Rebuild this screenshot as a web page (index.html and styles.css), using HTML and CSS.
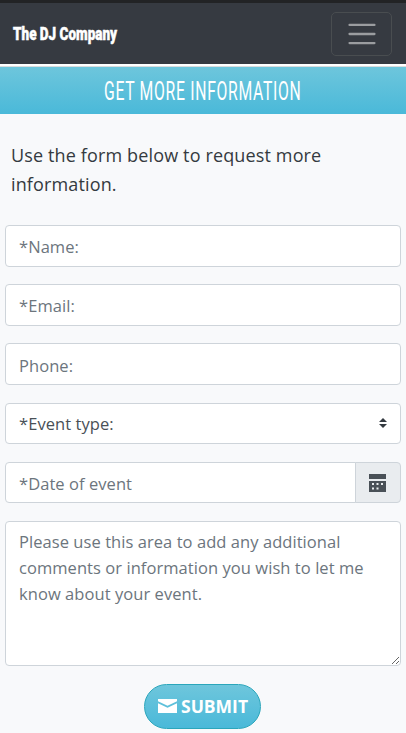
FILE: index.html
```
<!DOCTYPE html>
<html lang="en">
<head>
    <meta charset="UTF-8">
    <meta name="viewport" content="width=device-width, initial-scale=1.0">
    <title>The DJ Company</title>
    <link rel="stylesheet" href="styles.css">
</head>
<body>
    <nav class="navbar">
        <a class="navbar-brand" href="#">The DJ Company</a>
        <button class="navbar-toggler" type="button" aria-label="Toggle navigation">
            <svg width="30" height="30" viewBox="0 0 30 30">
                <path stroke="rgba(255,255,255,.5)" stroke-linecap="round" stroke-width="2" d="M4 7h22M4 15h22M4 23h22"/>
            </svg>
        </button>
    </nav>

    <h1 class="title"><span>GET MORE INFORMATION</span></h1>

    <main>
        <p class="intro">Use the form below to request more information.</p>

        <form id="contactForm">
            <input class="form-control" type="text" id="name" placeholder="*Name:">
            <input class="form-control" type="text" id="email" placeholder="*Email:">
            <input class="form-control" type="text" id="phone" placeholder="Phone:">
            <div class="select-group">
                <select class="form-control" id="eventType">
                    <option>*Event type:</option>
                </select>
                <svg class="select-arrow" width="8" height="10" viewBox="0 0 4 5">
                    <path fill="#343a40" d="M2 0L0 2h4zm0 5L0 3h4z"/>
                </svg>
            </div>
            <div class="input-group">
                <input class="form-control" type="text" id="date" placeholder="*Date of event">
                <span class="input-addon">
                    <svg width="17" height="18" viewBox="0 0 17 18">
                        <path fill="#495057" fill-rule="evenodd" d="M0 0h17v5H0zM0 7h17v11H0zM3 9v2h2V9zM7.500 9v2h2V9zM12 9v2h2V9zM3 13.500v2h2v-2zM7.500 13.500v2h2v-2z"/>
                    </svg>
                </span>
            </div>
            <textarea class="form-control" id="comments" placeholder="Please use this area to add any additional comments or information you wish to let me know about your event."></textarea>
            <button class="submit" type="submit">
                <svg width="19" height="14" viewBox="0 0 19 14">
                    <path fill="#fff" d="M0 0h19v2.2L9.500 6.800 0 2.200zM0 4.200l9.500 4.600L19 4.200V14H0z"/>
                </svg>
                <span>SUBMIT</span>
            </button>
        </form>
    </main>
</body>
</html>
```
FILE: styles.css
```
* {
    box-sizing: border-box;
}

body {
    margin: 0;
    height: 733px;
    overflow: hidden;
    background-color: #f8f9fb;
    color: #343a40;
    font-family: "Open Sans", sans-serif;
}

.navbar {
    display: flex;
    align-items: center;
    justify-content: space-between;
    height: 64px;
    padding: 0 14px 0 13px;
    border-top: 3px solid #222325;
    background-color: #363a41;
}

.navbar-brand {
    padding-top: 1px;
    color: #fff;
    font-family: Roboto, sans-serif;
    font-size: 18.5px;
    font-weight: 900;
    white-space: nowrap;
    text-decoration: none;
    -webkit-text-stroke: 0.5px #fff;
    transform: scaleX(0.73);
    transform-origin: left;
}

.navbar-toggler {
    display: flex;
    align-items: center;
    justify-content: center;
    width: 61px;
    height: 44px;
    padding: 0;
    border: 1px solid #494d50;
    border-radius: 5px;
    background: none;
}

.navbar-toggler svg {
    width: 36px;
    height: 34px;
}

.title {
    height: 50px;
    margin: 0;
    border-top: 2px solid #fff;
    box-shadow: inset 0 1px #d8dcde;
    background: linear-gradient(#6ec6dc, #4ab9d9);
    color: #fff;
    font-family: Roboto, sans-serif;
    font-size: 25px;
    font-weight: 400;
    line-height: 51px;
    text-align: center;
}

.title span {
    display: inline-block;
    letter-spacing: 1.1px;
    transform: scaleX(0.63);
}

main {
    padding: 27px 5px 0;
}

.intro {
    margin: 0 6px 26px;
    font-size: 18px;
    letter-spacing: 0.14px;
    line-height: 29px;
}

form {
    display: flex;
    flex-direction: column;
    gap: 17.6px;
}

.form-control {
    display: block;
    width: 100%;
    height: 41.6px;
    padding: 7px 13px 5px;
    border: 1px solid #ced4da;
    border-radius: 4px;
    outline: none;
    background-color: #fff;
    color: #495057;
    font-family: "Open Sans", sans-serif;
    font-size: 16.5px;
    letter-spacing: 0.06px;
    line-height: 26px;
}

.form-control::placeholder {
    color: #6c757d;
    opacity: 1;
}

.select-group {
    position: relative;
}

select.form-control {
    appearance: none;
}

.select-arrow {
    position: absolute;
    right: 14px;
    top: 15px;
}

.input-group {
    display: flex;
}

.input-group .form-control {
    flex: 1;
    border-radius: 4px 0 0 4px;
}

.input-addon {
    display: flex;
    align-items: center;
    justify-content: center;
    width: 46px;
    margin-left: -1px;
    padding-right: 2px;
    border: 1px solid #ced4da;
    border-radius: 0 4px 4px 0;
    background-color: #e9ecef;
}

textarea.form-control {
    height: 145px;
    resize: vertical;
}

.submit {
    display: flex;
    align-items: center;
    align-self: center;
    gap: 4px;
    width: 117px;
    height: 45px;
    margin-right: 1px;
    padding: 0 0 0 13px;
    border: 1px solid #2ba6bb;
    border-radius: 23px;
    background: linear-gradient(#6ec6dc, #4ab9d9);
    color: #fff;
    font-family: "Open Sans", sans-serif;
    font-size: 17.5px;
    font-weight: 700;
}
```
